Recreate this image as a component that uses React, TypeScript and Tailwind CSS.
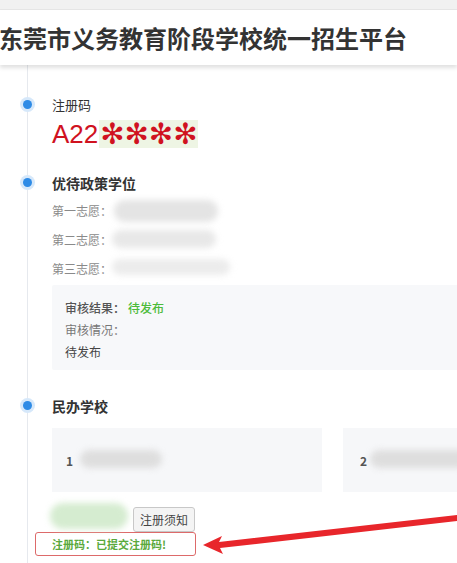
import React from "react";

const Blur = ({ className }: { className: string }) => (
  <div className={"absolute rounded-full blur-[3px] " + className} />
);

const Dot = ({ top }: { top: string }) => (
  <span
    className={
      "absolute left-[-29px] w-[9px] h-[9px] rounded-full bg-[#2e8be6] ring-[3px] ring-[#d6e8fa] " + top
    }
  />
);

export default function App() {
  return (
    <div
      className="relative w-[457px] h-[563px] overflow-hidden bg-white text-[#333]"
      style={{ fontFamily: '"Noto Sans CJK SC", "Noto Sans", sans-serif' }}
    >
      <div className="h-[10px] bg-[#f1f1f1] border-b border-[#e6e6e6]" />
      <header className="h-[55px] bg-white flex items-center shadow-[0_3px_4px_rgba(0,0,0,0.12)] relative z-10">
        <h1 className="text-[24px] font-bold leading-none text-[#333] whitespace-nowrap -ml-[1px]">
          东莞市义务教育阶段学校统一招生平台
        </h1>
      </header>

      <div className="pl-[27px]">
        <div className="border-l border-[#e6e9ee] pl-[24px] pt-[31px] pb-[40px] w-[600px]">
          {/* 注册码 */}
          <div className="relative">
            <Dot top="top-[4px]" />
            <div className="text-[13px] leading-[18px] text-[#333]">注册码</div>
            <div className="mt-[5px] flex items-center h-[30px]">
              <span
                className="text-[26px] leading-none text-[#d0121f]"
                style={{ fontFamily: '"Liberation Sans", Arial, sans-serif' }}
              >
                A22
              </span>
              <span
                className="ml-[1px] bg-[#eef5e4] text-[#d0121f] text-[29px] leading-[28px] px-[1px] h-[28px] flex items-center"
                style={{ fontFamily: '"DejaVu Sans", sans-serif' }}
              >
                ✻✻✻✻
              </span>
            </div>
          </div>

          {/* 优待政策学位 */}
          <div className="relative mt-[24px]">
            <Dot top="top-[5px]" />
            <div className="text-[14px] leading-[20px] font-semibold text-[#333]">优待政策学位</div>
            <div className="mt-[3px] text-[12px] text-[#8a8a8a]">
              <div className="relative h-[29px] flex items-center">
                第一志愿：
                <Blur className="left-[62px] top-[4px] w-[104px] h-[22px] bg-[#e4e4e4] rounded-[4px]" />
              </div>
              <div className="relative h-[29px] flex items-center">
                第二志愿：
                <Blur className="left-[60px] top-[5px] w-[104px] h-[18px] bg-[#e8e8e8]" />
              </div>
              <div className="relative h-[29px] flex items-center">
                第三志愿：
                <Blur className="left-[60px] top-[5px] w-[118px] h-[16px] bg-[#ececec]" />
              </div>
            </div>
            <div className="mt-[2px] h-[85px] bg-[#f7f8fa] rounded-[2px] px-[13px] pt-[12px] text-[12px] leading-[22px]">
              <div className="flex">
                <span className="text-[#555] font-medium">审核结果：</span>
                <span className="ml-[3px] text-[#4cbb3a] font-medium">待发布</span>
              </div>
              <div className="text-[#777]">审核情况：</div>
              <div className="text-[#444]">待发布</div>
            </div>
          </div>

          {/* 民办学校 */}
          <div className="relative mt-[26px]">
            <Dot top="top-[5px]" />
            <div className="text-[14px] leading-[20px] font-semibold text-[#333]">民办学校</div>
            <div className="mt-[12px] flex gap-[21px]">
              <div className="relative shrink-0 w-[270px] h-[64px] bg-[#f6f7f9] flex items-center pl-[14px] pt-[2px]">
                <span className="text-[12px] font-semibold text-[#555] relative z-10">1</span>
                <Blur className="left-[28px] top-[22px] w-[82px] h-[18px] bg-[#dedede] rounded-[3px]" />
              </div>
              <div className="relative shrink-0 w-[270px] h-[64px] bg-[#f6f7f9] flex items-center pl-[17px] pt-[2px]">
                <span className="text-[12px] font-semibold text-[#555] relative z-10">2</span>
                <Blur className="left-[27px] top-[22px] w-[100px] h-[18px] bg-[#dedede] rounded-[3px]" />
              </div>
            </div>

            <div className="relative mt-[15px] flex items-center h-[25px]">
              <Blur className="left-[-2px] top-[-4px] w-[78px] h-[26px] bg-[#d5ecd0]" />
              <button className="ml-[81px] h-[25px] px-[6px] text-[12px] text-[#444] bg-[#f4f4f4] border border-[#c8c8c8] rounded-[3px] relative z-10">
                注册须知
              </button>
            </div>
            <div className="-ml-[17px] w-[161px] h-[24px] border border-[#dd6a6a] rounded-[3px] flex items-center pl-[16px]">
              <span className="text-[11px] font-semibold text-[#5aa93c]">注册码：已提交注册码!</span>
            </div>
          </div>
        </div>
      </div>

      {/* annotation arrow */}
      <svg className="absolute left-0 top-0 pointer-events-none" width="457" height="563">
        <polygon
          points="203,545 222,536 219,542 457,515 457,521 220,548 223,554"
          fill="#e8262b"
        />
      </svg>
    </div>
  );
}
